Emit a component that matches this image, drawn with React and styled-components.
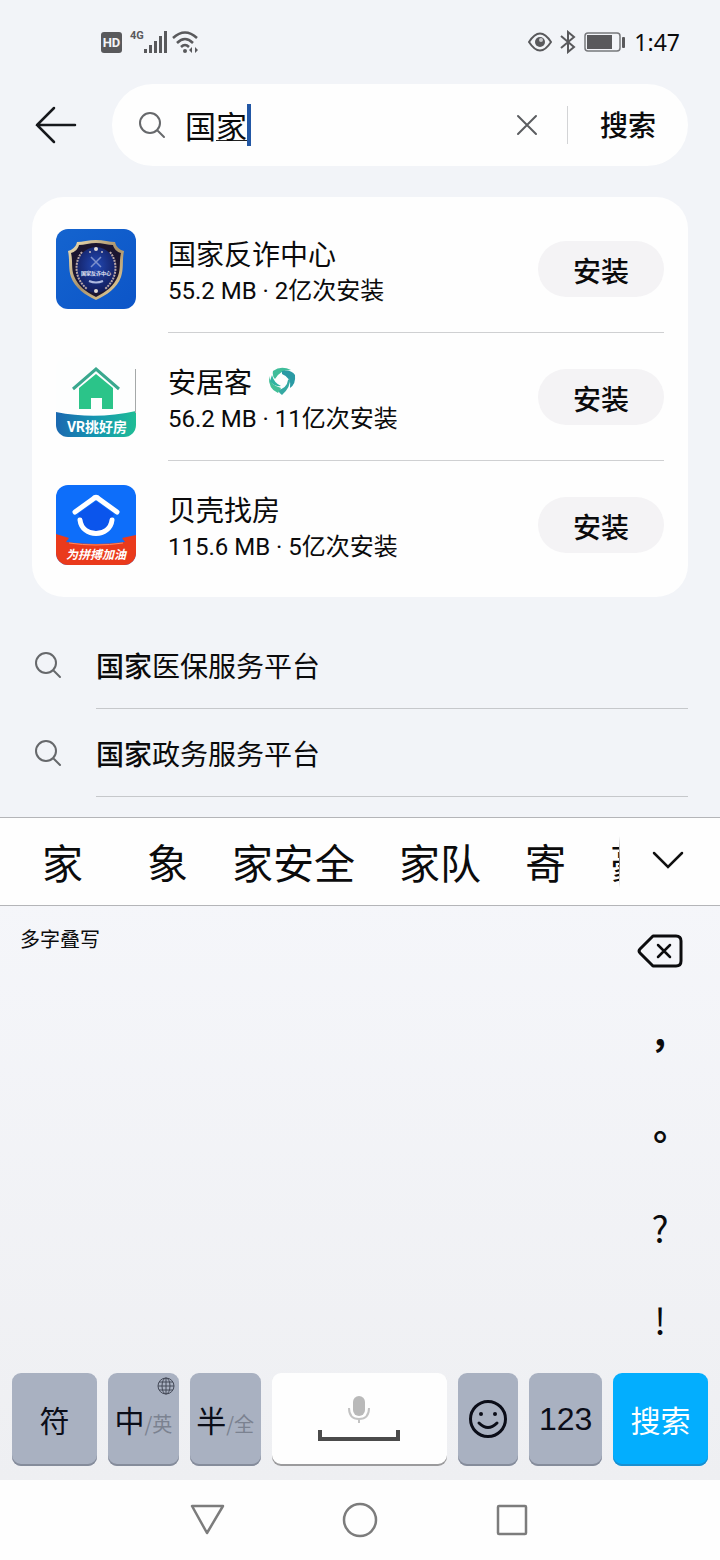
import { useState } from "react";
import styled, { createGlobalStyle } from "styled-components";

const apps = [
    { id: "fanzha", name: "国家反诈中心", meta: "55.2 MB · 2亿次安装", Icon: ShieldLogo },
    { id: "anjuke", name: "安居客", meta: "56.2 MB · 11亿次安装", Icon: HouseLogo, Badge: SwirlBadge },
    { id: "beike", name: "贝壳找房", meta: "115.6 MB · 5亿次安装", Icon: ShellLogo },
];

const suggestions = [
    { match: "国家", rest: "医保服务平台" },
    { match: "国家", rest: "政务服务平台" },
];

const candidates = ["家", "象", "家安全", "家队", "寄", "豪"];

const punctuation = [
    { mark: "，", bold: true },
    { mark: "。", bold: true },
    { mark: "?" },
    { mark: "!" },
];

function ShieldLogo() {
    return (
        <svg width="80" height="80" viewBox="0 0 80 80" aria-hidden="true">
            <defs>
                <linearGradient id="shieldBg" x1="0" y1="0" x2="1" y2="1">
                    <stop offset="0" stopColor="#1464cf" />
                    <stop offset="1" stopColor="#0c55c8" />
                </linearGradient>
                <linearGradient id="gold" x1="0" y1="0" x2="1" y2="1">
                    <stop offset="0" stopColor="#f2e3b8" />
                    <stop offset="0.5" stopColor="#a8916a" />
                    <stop offset="1" stopColor="#f0d9a0" />
                </linearGradient>
                <radialGradient id="shieldBlue" cx="0.5" cy="0.4" r="0.6">
                    <stop offset="0" stopColor="#2148b4" />
                    <stop offset="1" stopColor="#121b58" />
                </radialGradient>
            </defs>
            <rect width="80" height="80" rx="12" fill="url(#shieldBg)" />
            <path d="M40 11C33 11 26 13 21 13C20 18 16 21 12 22C14 31 12 39 15 48C19 59 29 66 40 71C51 66 61 59 65 48C68 39 66 31 68 22C64 21 60 18 59 13C54 13 47 11 40 11Z" fill="url(#gold)" />
            <path d="M40 14C34 14 28 16 23 16C22 20 19 23 15 24C17 32 15 39 18 47C22 57 30 63 40 68C50 63 58 57 62 47C65 39 63 32 65 24C61 23 58 20 57 16C52 16 46 14 40 14Z" fill="#1b1530" />
            <ellipse cx="40" cy="41" rx="20" ry="23" fill="url(#shieldBlue)" />
            <path d="M26 23C18 33 18 49 31 60M54 23C62 33 62 49 49 60" fill="none" stroke="#b9a7a8" strokeWidth="2" strokeDasharray="2 1" />
            <path d="M35 28L45 38M45 28L35 38" stroke="#7e91cc" strokeWidth="1.5" />
            <path d="M33 52Q40 55 47 52" stroke="#aeb9df" strokeWidth="2" fill="none" />
            <circle cx="40" cy="20" r="2" fill="#e4dcd5" />
            <circle cx="34" cy="23" r="1" fill="#c7bfc0" />
            <circle cx="46" cy="23" r="1" fill="#c7bfc0" />
            <circle cx="40" cy="62" r="2" fill="#e4dcd5" />
            <text x="40" y="46" textAnchor="middle" fontSize="5" fontWeight="700" fill="#e6eaf6">国家反诈中心</text>
        </svg>
    );
}

function HouseLogo() {
    return (
        <svg width="80" height="80" viewBox="0 0 80 80" aria-hidden="true">
            <defs>
                <linearGradient id="houseBand" x1="0" y1="0" x2="1" y2="0">
                    <stop offset="0" stopColor="#1b68b0" />
                    <stop offset="0.5" stopColor="#1596b0" />
                    <stop offset="1" stopColor="#1fbd95" />
                </linearGradient>
                <clipPath id="houseClip">
                    <rect width="80" height="80" rx="12" />
                </clipPath>
            </defs>
            <g clipPath="url(#houseClip)">
                <rect width="80" height="80" fill="#fdfefe" />
                <path d="M0 55Q40 63 80 54V80H0Z" fill="url(#houseBand)" />
            </g>
            <path d="M79.500 12V56" stroke="#a5a9a9" strokeWidth="1" />
            <path d="M17 32L40 12L63 32" fill="none" stroke="#3aa88e" strokeWidth="3" />
            <path d="M23 31L40 17L57 31V52H46V41H35V52H23Z" fill="#2bc489" />
            <text x="41" y="75" textAnchor="middle" fontSize="14" fontWeight="700" fill="#fff">VR挑好房</text>
        </svg>
    );
}

function ShellLogo() {
    return (
        <svg width="80" height="80" viewBox="0 0 80 80" aria-hidden="true">
            <defs>
                <clipPath id="shellClip">
                    <rect width="80" height="80" rx="12" />
                </clipPath>
            </defs>
            <g clipPath="url(#shellClip)">
                <rect width="80" height="80" fill="#0d6efa" />
                <path d="M0 49L13 53L10 57Q40 61 69 57L66 53L80 50V80H0Z" fill="#ea3a1c" />
                <path d="M13 58Q40 62 67 58" fill="none" stroke="#ff8a5c" strokeWidth="1" />
            </g>
            <path d="M22 29L40 16L58 29L54 38H26Z" fill="#0b55ec" />
            <path d="M24 35C26 53 54 53 56 35Z" fill="#0b55ec" />
            <path d="M19 27L37 14Q40 11 43 14L61 27" fill="none" stroke="#fff" strokeWidth="5" strokeLinecap="round" />
            <path d="M24 35C26 53 54 53 56 35" fill="none" stroke="#fff" strokeWidth="5" strokeLinecap="round" />
            <text x="40" y="74" textAnchor="middle" fontSize="12" fontWeight="700" fontStyle="italic" fill="#fff">为拼搏加油</text>
        </svg>
    );
}

function SwirlBadge() {
    return (
        <svg width="28" height="28" viewBox="0 0 28 28" fill="none" aria-hidden="true">
            <path d="M5 4Q13-2 23 3Q12 3 7 12Q4 9 5 4Z" fill="#3fbd9a" />
            <path d="M14 4Q23 2 27 8Q28 17 22 21Q24 11 14 7Z" fill="#2a9aa4" />
            <path d="M22 11Q23 20 14 28Q11 26 10 23Q19 21 20 13Z" fill="#35a9a3" />
            <path d="M1 9Q2 18 13 21L10 26Q0 22 1 9Z" fill="#42bf97" />
            <path d="M4 8Q6 16 13 19Q6 20 2 14Z" fill="#2eb3a0" />
        </svg>
    );
}

function SearchIcon() {
    return (
        <svg width="28" height="28" viewBox="0 0 28 28" fill="none" stroke="#66686b" strokeWidth="2" aria-hidden="true">
            <circle cx="12" cy="12" r="10" />
            <path d="M20 20L26 26" strokeLinecap="round" />
        </svg>
    );
}

function StatusBar() {
    return (
        <Status>
            <StatusGroup>
                <HdTag>HD</HdTag>
                <Network>
                    <NetworkType>4G</NetworkType>
                    <svg width="24" height="24" viewBox="0 0 24 24" fill="#59595c" aria-hidden="true">
                        <rect x="0" y="19" width="3" height="4" />
                        <rect x="5" y="15" width="3" height="8" />
                        <rect x="10" y="11" width="3" height="12" />
                        <rect x="15" y="6" width="3" height="17" />
                        <rect x="20" y="1" width="3" height="22" />
                    </svg>
                    <svg width="28" height="24" viewBox="0 0 28 24" fill="none" stroke="#59595c" strokeWidth="2.500" aria-hidden="true">
                        <path d="M1 8Q13-3 25 8" />
                        <path d="M5 13Q13 5 21 13" />
                        <path d="M9 17Q13 13 17 17" />
                        <circle cx="13" cy="21" r="2" fill="#59595c" stroke="none" />
                        <path d="M17 20L20 17V23ZM26 20L23 17V23Z" fill="#59595c" stroke="none" />
                    </svg>
                </Network>
            </StatusGroup>
            <StatusGroup>
                <svg width="24" height="20" viewBox="0 0 24 20" fill="none" stroke="#59595c" strokeWidth="2" aria-hidden="true">
                    <path d="M1 10Q12-7 23 10Q12 27 1 10Z" />
                    <circle cx="12" cy="10" r="5" fill="#59595c" stroke="none" />
                    <circle cx="13" cy="8" r="2" fill="#c9cacd" stroke="none" />
                </svg>
                <svg width="16" height="24" viewBox="0 0 16 24" fill="none" stroke="#59595c" strokeWidth="2" aria-hidden="true">
                    <path d="M1 6L14 17L8 22V2L14 7L1 18" />
                </svg>
                <svg width="42" height="20" viewBox="0 0 42 20" aria-hidden="true">
                    <rect x="1" y="1" width="35" height="18" rx="3" fill="none" stroke="#77787b" strokeWidth="1.500" />
                    <rect x="3" y="3" width="25" height="14" fill="#59595c" />
                    <rect x="38" y="5" width="3" height="11" rx="1" fill="#59595c" />
                </svg>
                <Clock>1:47</Clock>
            </StatusGroup>
        </Status>
    );
}

function SearchBar() {
    const [query, setQuery] = useState("国家");
    return (
        <SearchRow>
            <IconButton aria-label="返回">
                <svg width="42" height="40" viewBox="0 0 42 40" fill="none" stroke="#16181c" strokeWidth="2.500" strokeLinecap="round" aria-hidden="true">
                    <path d="M2 20H40M19 3L2 20L19 37" />
                </svg>
            </IconButton>
            <Pill>
                <SearchIcon />
                <Field>
                    <QueryInput
                        aria-label="搜索应用"
                        value={query}
                        onChange={(e) => setQuery(e.target.value)}
                        style={{ width: `${query.length}em` }}
                    />
                    <Caret />
                </Field>
                <IconButton aria-label="清除" onClick={() => setQuery("")}>
                    <svg width="22" height="22" viewBox="0 0 22 22" stroke="#5b5d60" strokeWidth="2" strokeLinecap="round" aria-hidden="true">
                        <path d="M2 2L20 20M20 2L2 20" />
                    </svg>
                </IconButton>
                <SearchButton>搜索</SearchButton>
            </Pill>
        </SearchRow>
    );
}

function Keyboard() {
    return (
        <KeyboardPanel>
            <CandidateBar>
                <CandidateList>
                    {candidates.map((word, i) => (
                        <Candidate key={word} $first={i === 0}>{word}</Candidate>
                    ))}
                </CandidateList>
                <FadeLine />
                <ExpandButton aria-label="展开">
                    <svg width="32" height="18" viewBox="0 0 32 18" fill="none" stroke="#111" strokeWidth="2.500" strokeLinecap="round" aria-hidden="true">
                        <path d="M2 2L16 16L30 2" />
                    </svg>
                </ExpandButton>
            </CandidateBar>
            <WritingArea>
                <ModeHint>多字叠写</ModeHint>
                <SideKeys>
                    <SideKey aria-label="删除">
                        <svg width="46" height="34" viewBox="0 0 46 34" fill="none" stroke="#0c0c0e" strokeWidth="3" strokeLinejoin="round" strokeLinecap="round" aria-hidden="true">
                            <path d="M16 2H39Q44 2 44 7V27Q44 32 39 32H16L3 19Q1 17 3 15Z" />
                            <path d="M21 11L33 23M33 11L21 23" strokeWidth="2.500" />
                        </svg>
                    </SideKey>
                    {punctuation.map(({ mark, bold }) => (
                        <SideKey key={mark} $bold={bold}>{mark}</SideKey>
                    ))}
                </SideKeys>
            </WritingArea>
            <KeyRow>
                <Key>符</Key>
                <Key>
                    中<Alt>/英</Alt>
                    <Globe width="20" height="20" viewBox="0 0 20 20" fill="none" stroke="#454a58" strokeWidth="1" aria-hidden="true">
                        <circle cx="10" cy="10" r="8" />
                        <ellipse cx="10" cy="10" rx="4" ry="8" />
                        <path d="M10 2V18M2 10H18M3 6H17M3 14H17" />
                    </Globe>
                </Key>
                <Key>半<Alt>/全</Alt></Key>
                <Key $tone="light" aria-label="空格">
                    <svg width="82" height="50" viewBox="0 0 82 50" fill="none" aria-hidden="true">
                        <rect x="35" y="2" width="12" height="20" rx="6" fill="#b9b9b9" />
                        <path d="M31 14Q31 25 41 25T51 14M41 25V29" stroke="#c3c3c3" strokeWidth="2" />
                        <path d="M2 36V45H80V36" stroke="#4b4b4b" strokeWidth="4" />
                    </svg>
                </Key>
                <Key aria-label="表情">
                    <svg width="40" height="40" viewBox="0 0 40 40" fill="none" stroke="#0b0d18" strokeWidth="3" strokeLinecap="round" aria-hidden="true">
                        <circle cx="20" cy="20" r="17.500" />
                        <path d="M11 24Q20 33 29 24" />
                        <circle cx="13" cy="15" r="2" fill="#0b0d18" stroke="none" />
                        <circle cx="27" cy="15" r="2" fill="#0b0d18" stroke="none" />
                    </svg>
                </Key>
                <Key $latin>123</Key>
                <Key $tone="primary">搜索</Key>
            </KeyRow>
        </KeyboardPanel>
    );
}

function App() {
    return (
        <>
            <GlobalStyle />
            <Screen>
                <StatusBar />
                <SearchBar />
                <Card>
                    {apps.map(({ id, name, meta, Icon, Badge }) => (
                        <AppRow key={id}>
                            <Icon />
                            <AppBody>
                                <AppText>
                                    <AppName>{name}{Badge && <Badge />}</AppName>
                                    <AppMeta>{meta}</AppMeta>
                                </AppText>
                                <InstallButton>安装</InstallButton>
                            </AppBody>
                        </AppRow>
                    ))}
                </Card>
                <Suggestions>
                    {suggestions.map(({ match, rest }) => (
                        <Suggestion key={rest}>
                            <SearchIcon />
                            <SuggestionLink href="#"><b>{match}</b>{rest}</SuggestionLink>
                        </Suggestion>
                    ))}
                </Suggestions>
                <Keyboard />
                <NavBar>
                    <IconButton aria-label="返回">
                        <svg width="36" height="36" viewBox="0 0 36 36" fill="none" stroke="#7c7c7c" strokeWidth="2.500" strokeLinejoin="round" aria-hidden="true">
                            <path d="M2 4H33L17 31Z" />
                        </svg>
                    </IconButton>
                    <IconButton aria-label="主页">
                        <svg width="36" height="36" viewBox="0 0 36 36" fill="none" stroke="#7c7c7c" strokeWidth="2.500" aria-hidden="true">
                            <circle cx="18" cy="18" r="16" />
                        </svg>
                    </IconButton>
                    <IconButton aria-label="最近任务">
                        <svg width="36" height="36" viewBox="0 0 36 36" fill="none" stroke="#7c7c7c" strokeWidth="2.500" aria-hidden="true">
                            <rect x="4" y="4" width="28" height="28" rx="1" />
                        </svg>
                    </IconButton>
                </NavBar>
            </Screen>
        </>
    );
}

export default App;

const GlobalStyle = createGlobalStyle`
  * {
    box-sizing: border-box;
  }
  body {
    margin: 0;
    background: #f2f4f8;
    color: #0b0b0c;
    font-family: Roboto, "Noto Sans CJK SC", sans-serif;
  }
  button {
    border: 0;
    padding: 0;
    background: none;
    color: inherit;
    font: inherit;
  }
  ul {
    list-style: none;
    margin: 0;
    padding: 0;
  }
  svg {
    display: block;
    flex: none;
  }
`;

const Screen = styled.div`
  display: flex;
  flex-direction: column;
  min-height: 100vh;
`;

const Status = styled.header`
  display: flex;
  align-items: center;
  justify-content: space-between;
  height: 84px;
  padding: 0 40px 0 101px;
`;

const StatusGroup = styled.div`
  display: flex;
  align-items: center;
  gap: 8px;
`;

const HdTag = styled.span`
  width: 21px;
  border-radius: 3px;
  background: #59595c;
  color: #f2f4f8;
  font-size: 13px;
  font-weight: 700;
  line-height: 21px;
  text-align: center;
`;

const Network = styled.span`
  display: flex;
  align-items: flex-start;
  svg + svg {
    margin-left: 4px;
  }
`;

const NetworkType = styled.span`
  color: #59595c;
  font-size: 11px;
  font-weight: 700;
  line-height: 12px;
`;

const Clock = styled.time`
  font-family: "Noto Sans", sans-serif;
  font-size: 23px;
  line-height: 28px;
`;

const IconButton = styled.button`
  display: flex;
  align-items: center;
  justify-content: center;
`;

const SearchRow = styled.div`
  display: flex;
  align-items: center;
  gap: 35px;
  padding: 0 32px 0 35px;
`;

const Pill = styled.div`
  flex: 1;
  display: flex;
  align-items: center;
  height: 82px;
  padding-left: 26px;
  border-radius: 41px;
  background: #fefefe;
`;

const Field = styled.div`
  flex: 1;
  display: flex;
  align-items: center;
  padding-left: 19px;
  font-size: 31px;
`;

/* the last syllable is still being composed, so it gets an underline */
const QueryInput = styled.input`
  height: 42px;
  padding: 0 0 2px;
  border: 0;
  outline: 0;
  color: inherit;
  font: inherit;
  background: linear-gradient(#222, #222) right bottom 5px / 1em 1px no-repeat;
`;

const Caret = styled.span`
  width: 4px;
  height: 42px;
  background: #2257a5;
`;

const SearchButton = styled.button`
  margin-left: 29px;
  padding: 4px 32px 0;
  border-left: 1px solid #d3d4d6;
  font-size: 28px;
  font-weight: 500;
  line-height: 34px;
`;

const Card = styled.ul`
  margin: 31px 32px 0;
  padding: 8px 24px;
  border-radius: 32px;
  background: #fefefe;
`;

const AppRow = styled.li`
  display: flex;
  align-items: center;
  gap: 32px;
`;

const AppBody = styled.div`
  flex: 1;
  display: flex;
  align-items: center;
  justify-content: space-between;
  height: 128px;
  border-bottom: 1px solid #cfd0d2;
  ${AppRow}:last-child & {
    border-color: transparent;
  }
`;

const AppText = styled.div`
  display: flex;
  flex-direction: column;
  padding-top: 8px;
`;

const AppName = styled.span`
  display: flex;
  align-items: center;
  gap: 16px;
  font-size: 28px;
  line-height: 36px;
  svg {
    margin-bottom: 6px;
  }
`;

const AppMeta = styled.span`
  font-size: 24px;
  line-height: 34px;
`;

const InstallButton = styled.button`
  width: 126px;
  height: 56px;
  padding-top: 2px;
  border-radius: 28px;
  background: #f4f3f5;
  font-size: 28px;
  font-weight: 500;
`;

const Suggestions = styled.ul`
  margin-top: 24px;
  padding: 0 32px 20px 34px;
`;

const Suggestion = styled.li`
  display: flex;
  align-items: center;
  gap: 34px;
`;

const SuggestionLink = styled.a`
  flex: 1;
  padding-top: 6px;
  border-bottom: 1px solid #c6c8cb;
  color: inherit;
  font-size: 28px;
  line-height: 81px;
  text-decoration: none;
  b {
    font-weight: 500;
  }
`;

const KeyboardPanel = styled.section`
  flex: 1;
  display: flex;
  flex-direction: column;
  background: linear-gradient(#f6f7fb, #eeeff2);
`;

const CandidateBar = styled.div`
  display: flex;
  height: 89px;
  border-top: 1px solid #b4b5b8;
  border-bottom: 1px solid #b4b5b8;
  background: #fefefe;
`;

const CandidateList = styled.div`
  flex: 1;
  min-width: 0;
  display: flex;
  padding-left: 20px;
  overflow: hidden;
`;

const Candidate = styled.button`
  flex: none;
  padding: 0 22px 2px;
  margin-right: ${(p) => (p.$first ? "20px" : "0")};
  font-size: 41px;
`;

const FadeLine = styled.span`
  align-self: center;
  width: 1px;
  height: 52px;
  background: linear-gradient(transparent, #77787b, transparent);
`;

const ExpandButton = styled.button`
  width: 100px;
  padding: 0 4px 4px 0;
  display: flex;
  align-items: center;
  justify-content: center;
`;

const WritingArea = styled.div`
  flex: 1;
  display: flex;
  justify-content: space-between;
  padding-left: 20px;
`;

const ModeHint = styled.span`
  padding-top: 21px;
  font-size: 20px;
  line-height: 26px;
`;

const SideKeys = styled.div`
  width: 120px;
`;

const SideKey = styled.button`
  display: flex;
  align-items: center;
  justify-content: center;
  width: 100%;
  height: 92px;
  padding-bottom: 2px;
  font-family: "Noto Sans CJK TC", sans-serif;
  font-size: 36px;
  font-weight: ${(p) => (p.$bold ? 700 : 400)};
`;

const KeyRow = styled.div`
  display: grid;
  grid-template-columns: 85fr 71fr 71fr 176fr 60fr 73fr 95fr;
  gap: 11px;
  padding: 0 12px 14px;
`;

const keyColors = {
    light: { bg: "#fefefe", edge: "#9b9b9d", text: "#111" },
    primary: { bg: "#03aefe", edge: "#1a8fd0", text: "#fff" },
    plain: { bg: "#a9b1c1", edge: "#858c9b", text: "#0b0d18" },
};

const Key = styled.button`
  position: relative;
  display: flex;
  align-items: baseline;
  align-content: center;
  flex-wrap: wrap;
  justify-content: center;
  height: 93px;
  padding-bottom: ${(p) => (p.$latin ? "0" : "2px")};
  border-radius: 9px;
  background: ${(p) => keyColors[p.$tone || "plain"].bg};
  box-shadow: inset 0 -2px 0 ${(p) => keyColors[p.$tone || "plain"].edge};
  color: ${(p) => keyColors[p.$tone || "plain"].text};
  font-family: ${(p) => (p.$latin ? '"Liberation Sans"' : '"Noto Sans CJK SC"')}, sans-serif;
  font-size: ${(p) => (p.$latin ? "32px" : "30px")};
`;

const Alt = styled.span`
  color: #7b8290;
  font-size: 20px;
`;

const Globe = styled.svg`
  position: absolute;
  top: 3px;
  right: 3px;
`;

const NavBar = styled.nav`
  display: flex;
  align-items: center;
  justify-content: center;
  gap: 116px;
  height: 80px;
  background: #fefefe;
`;
